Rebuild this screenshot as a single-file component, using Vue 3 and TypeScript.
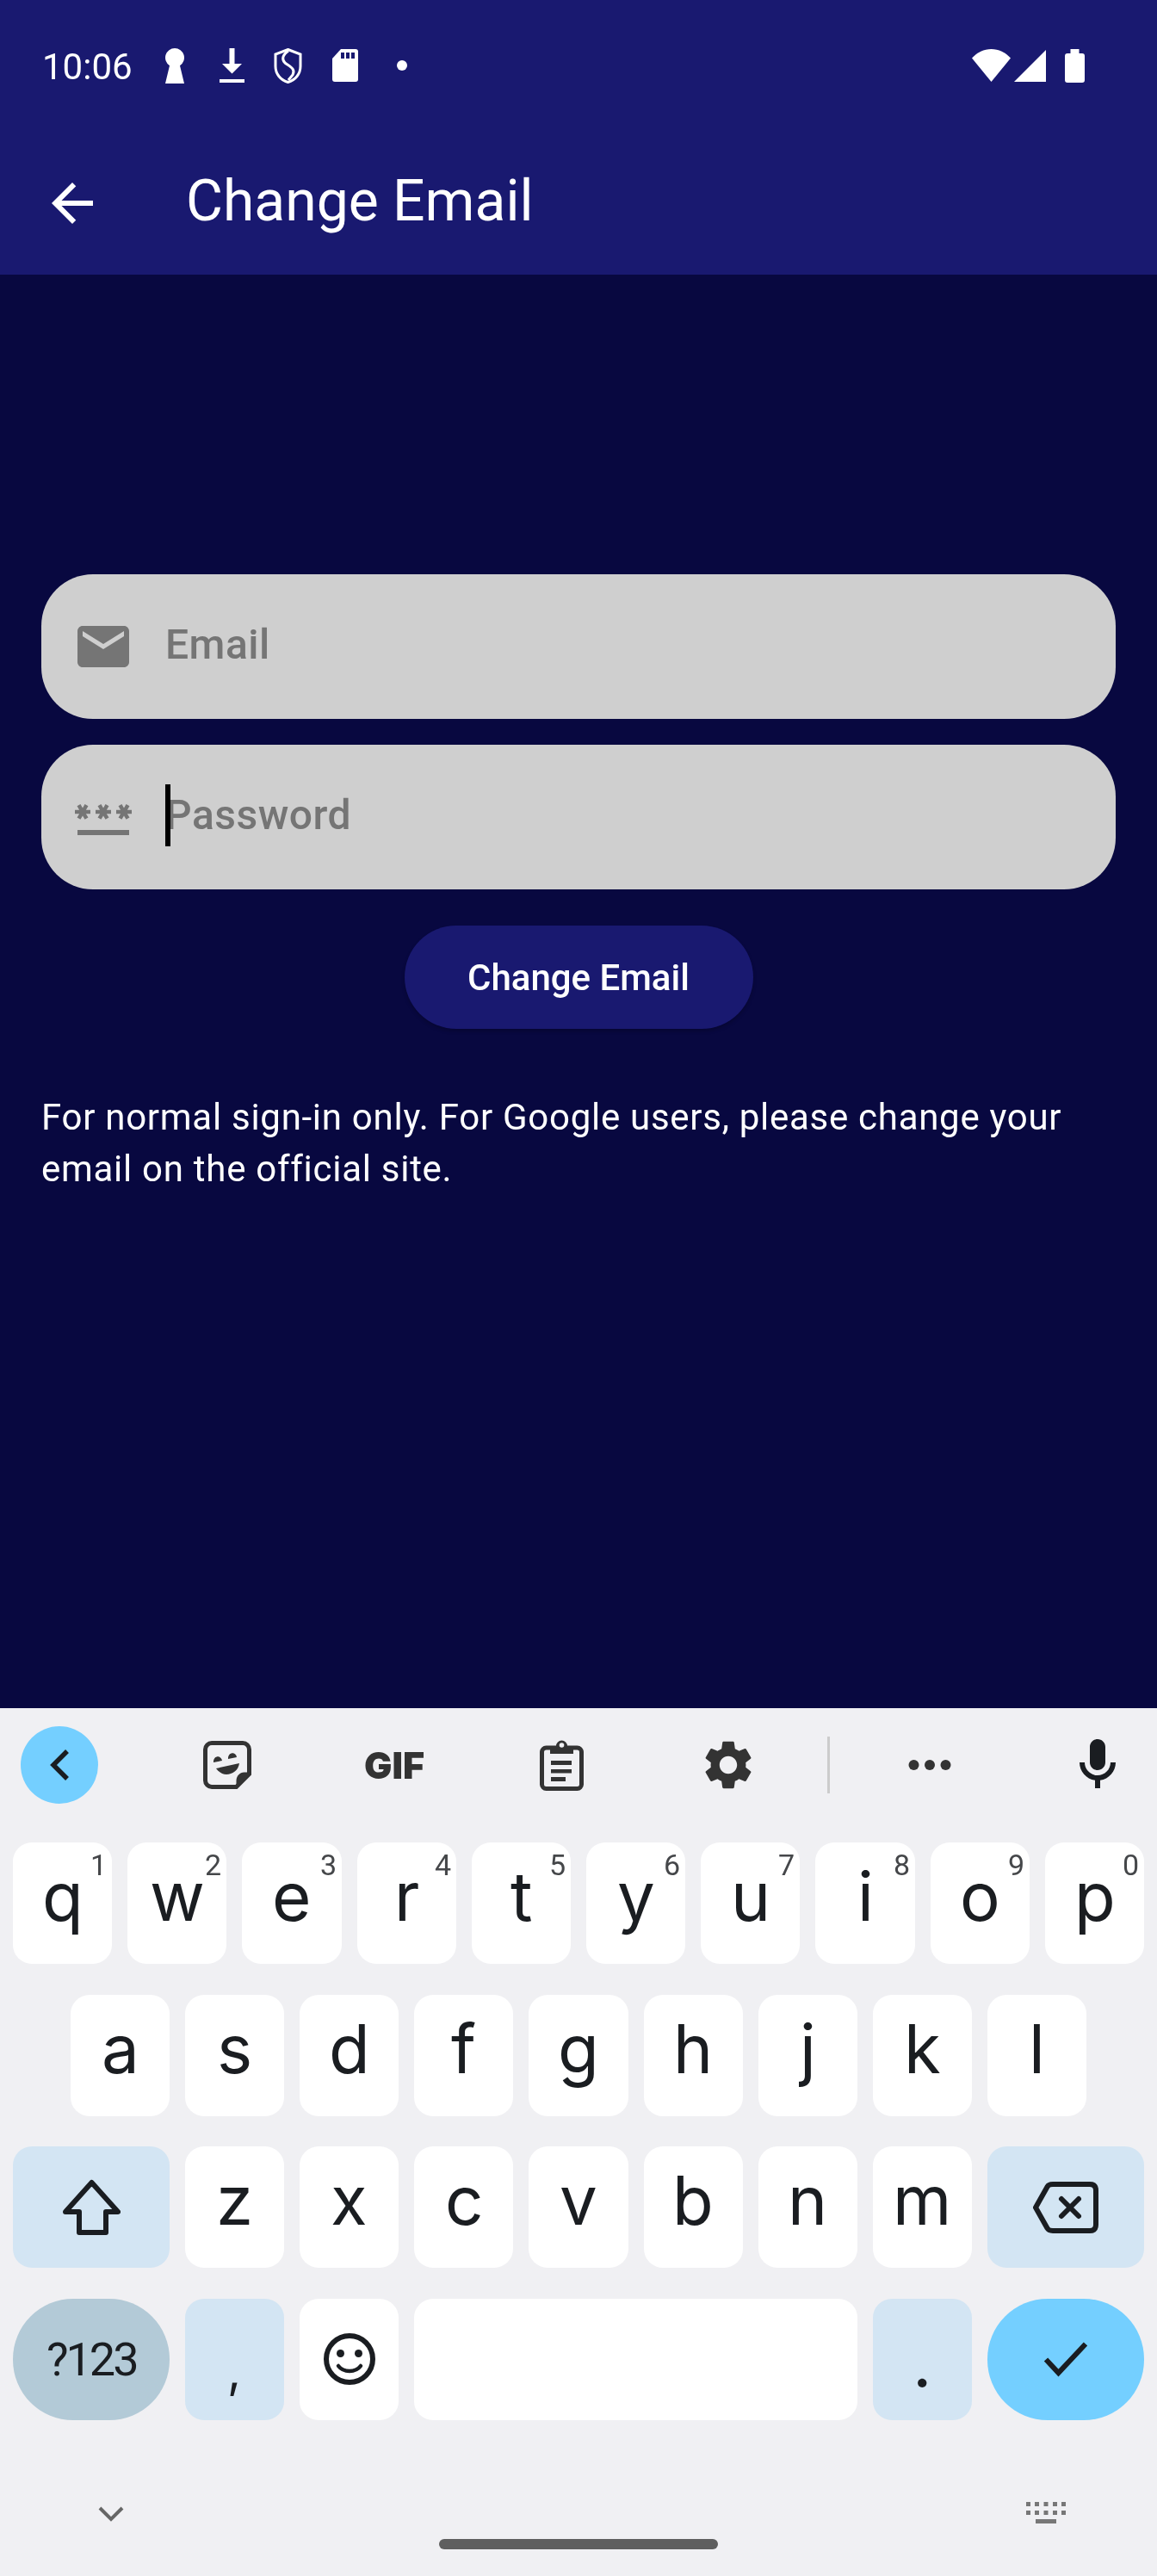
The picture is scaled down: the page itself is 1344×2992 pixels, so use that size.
<template>
  <div class="screen">
    <header class="app-header">
      <div class="status-bar">
        <span class="clock txt">10:06</span>
        <svg class="st-keyhole" width="22" height="41" viewBox="0 0 22 41"><path d="M11 0a11 11 0 0 1 6 20.2L22 41H0L5 20.2A11 11 0 0 1 11 0z" fill="#fff" /></svg>
        <svg class="st-download" width="29" height="40" viewBox="0 0 29 40"><path d="M11.5 0h6v18H26L14.5 29.5 3 18h8.500zM0 36h29v4H0z" fill="#fff" /></svg>
        <svg class="st-shield" width="33" height="41" viewBox="0 0 33 41">
          <path d="M16.500 1.500L31 7v14c0 9-6 16-14.500 18.500C8 37 2 30 2 21V7z" fill="none" stroke="#fff" stroke-width="3" />
          <path d="M17 3C10 8 9 13 13 17c5 4 13 7 9 14l-5 6" fill="none" stroke="#fff" stroke-width="3" />
        </svg>
        <svg class="st-sd" width="30" height="38" viewBox="0 0 30 38">
          <path d="M10 0h17a3 3 0 0 1 3 3v32a3 3 0 0 1-3 3H3a3 3 0 0 1-3-3V11z" fill="#fff" />
          <path d="M10 4h4v7h-4zM16 4h4v7h-4zM22 4h4v7h-4z" fill="#191970" />
        </svg>
        <span class="st-dot"></span>
        <div class="status-right">
          <svg width="45" height="38" viewBox="0 0 45 38"><path d="M0 10.500C6 4 14 0 22.500 0S39 4 45 10.500L22.500 38z" fill="#fff" /></svg>
          <svg class="st-signal" width="37" height="37" viewBox="0 0 37 37"><path d="M37 0v37H0z" fill="#fff" /></svg>
          <svg class="st-battery" width="23" height="39" viewBox="0 0 23 39"><path d="M6.500 0h10v5H20a3 3 0 0 1 3 3v28a3 3 0 0 1-3 3H3a3 3 0 0 1-3-3V8a3 3 0 0 1 3-3h3.500z" fill="#fff" /></svg>
        </div>
      </div>
      <div class="title-row">
        <svg class="back-icon" width="72" height="72" viewBox="0 0 24 24"><path d="M20 11H7.830l5.590-5.590L12 4l-8 8 8 8 1.410-1.410L7.830 13H20v-2z" fill="#fff" /></svg>
        <h1 class="title txt">Change Email</h1>
      </div>
    </header>

    <main class="content">
      <div class="field">
        <svg width="72" height="72" viewBox="0 0 24 24"><path d="M20 4H4c-1.100 0-1.990.9-1.990 2L2 18c0 1.100.9 2 2 2h16c1.100 0 2-.9 2-2V6c0-1.100-.9-2-2-2zm0 4l-8 5-8-5V6l8 5 8-5v2z" fill="#757575" /></svg>
        <span class="placeholder txt">Email</span>
      </div>
      <div class="field second">
        <svg width="72" height="72" viewBox="0 0 24 24"><path d="M2 17h20v2H2v-2zm1.150-4.050L4 11.470l.85 1.480 1.300-.75-.85-1.480H7v-1.500H5.300l.85-1.470L4.850 7 4 8.470 3.150 7l-1.300.75.85 1.470H1v1.500h1.700l-.85 1.480 1.300.75zm6.700-.75l1.300.75.85-1.480.85 1.480 1.300-.75-.85-1.480H15v-1.500h-1.700l.85-1.470-1.300-.75L12 8.470 11.150 7l-1.300.75.85 1.470H9v1.500h1.700l-.85 1.480zM23 9.220h-1.700l.85-1.470-1.300-.75L20 8.470 19.150 7l-1.300.75.85 1.470H17v1.500h1.700l-.85 1.480 1.300.75.85-1.480.85 1.480 1.300-.75-.85-1.480H23v-1.500z" fill="#757575" /></svg>
        <span class="placeholder txt">Password<i class="caret"></i></span>
      </div>
      <button class="submit" type="button"><span class="txt">Change Email</span></button>
      <p class="note txt">For normal sign-in only. For Google users, please change your email on the official site.</p>
    </main>

    <section class="keyboard">
      <div class="kb-tools">
        <span class="tool-back">
          <svg width="23" height="36" viewBox="0 0 23 36"><path d="M20 2L4 18l16 16" fill="none" stroke="#1a1d21" stroke-width="5.500" /></svg>
        </span>
        <span class="tool first-tool">
          <svg width="56" height="56" viewBox="0 0 56 56">
            <path d="M10 2.500h36a7.500 7.500 0 0 1 7.500 7.500v28.500l-15 15H10A7.500 7.500 0 0 1 2.500 46V10A7.500 7.500 0 0 1 10 2.500z" fill="none" stroke="#333" stroke-width="5" />
            <path d="M55 38L38.500 55V46c0-5 4-9.500 9-9.500h7.500z" fill="#333" />
            <path d="M12 25c-.5-8 9-9 10-2zM29 21c-.5-8 9-9 10-2z" fill="#333" />
            <path d="M15 32l27-6c-1 8-8 13-15 13-5 0-9-3-12-7z" fill="#333" />
          </svg>
        </span>
        <span class="tool"><b class="gif txt">GIF</b></span>
        <span class="tool">
          <svg width="51" height="60" viewBox="0 0 51 60">
            <rect x="2.500" y="10" width="46" height="47.500" rx="5" fill="none" stroke="#333" stroke-width="5" />
            <path d="M12 8h7a6.500 6.500 0 0 1 13 0h7v9H12z" fill="#333" />
            <circle cx="25.500" cy="7" r="2.800" fill="#f0f0f3" />
            <path d="M13 25h24v5H13zM13 35h24v4.500H13zM13 44h17v5H13z" fill="#333" />
          </svg>
        </span>
        <span class="tool">
          <svg width="68" height="68" viewBox="0 0 24 24"><path d="M19.140 12.940c.04-.3.06-.61.06-.94 0-.32-.02-.64-.07-.94l2.030-1.580c.18-.14.23-.41.12-.61l-1.920-3.320c-.12-.22-.37-.29-.59-.22l-2.390.96c-.5-.38-1.030-.7-1.620-.94l-.36-2.540c-.04-.24-.24-.41-.48-.41h-3.840c-.24 0-.43.17-.47.41l-.36 2.540c-.59.24-1.130.57-1.620.94l-2.390-.96c-.22-.08-.47 0-.59.22L2.740 8.870c-.12.21-.08.47.12.61l2.030 1.580c-.05.3-.09.63-.09.94s.02.64.07.94l-2.030 1.580c-.18.14-.23.41-.12.61l1.920 3.320c.12.22.37.29.59.22l2.390-.96c.5.38 1.030.7 1.620.94l.36 2.540c.05.24.24.41.48.41h3.840c.24 0 .44-.17.47-.41l.36-2.540c.59-.24 1.130-.56 1.620-.94l2.390.96c.22.08.47 0 .59-.22l1.920-3.320c.12-.22.07-.47-.12-.61l-2.010-1.580zM12 15.600c-1.980 0-3.600-1.620-3.600-3.600s1.620-3.600 3.600-3.600 3.600 1.620 3.600 3.600-1.620 3.600-3.600 3.600z" fill="#333" /></svg>
        </span>
        <span class="tool-divider"></span>
        <span class="tool-dots">
          <svg width="50" height="14" viewBox="0 0 50 14"><circle cx="6.500" cy="7" r="6" fill="#333" /><circle cx="25" cy="7" r="6" fill="#333" /><circle cx="43.500" cy="7" r="6" fill="#333" /></svg>
        </span>
        <span class="tool-mic">
          <svg width="72" height="72" viewBox="0 0 24 24"><path d="M12 14c1.660 0 3-1.340 3-3V5c0-1.660-1.340-3-3-3S9 3.340 9 5v6c0 1.660 1.340 3 3 3zM17 11c0 2.760-2.240 5-5 5s-5-2.240-5-5H5c0 3.530 2.610 6.430 6 6.920V21h2v-3.080c3.390-.49 6-3.390 6-6.920h-2z" fill="#1a1d21" /></svg>
        </span>
      </div>

      <div class="kb-rows">
        <div class="kb-row row-top">
          <div v-for="(k, i) in topRow" :key="k" class="key">
            <span class="letter txt">{{ k }}</span>
            <span class="hint txt">{{ (i + 1) % 10 }}</span>
          </div>
        </div>
        <div class="kb-row row-home">
          <div v-for="k in homeRow" :key="k" class="key"><span class="letter txt">{{ k }}</span></div>
        </div>
        <div class="kb-row">
          <div class="key wide fn">
            <svg width="67" height="65" viewBox="0 0 67 65"><path d="M33.500 4L64 38H50v24H19V38H3z" fill="none" stroke="#1a1d21" stroke-width="6" stroke-linejoin="round" /></svg>
          </div>
          <div v-for="k in bottomRow" :key="k" class="key"><span class="letter txt">{{ k }}</span></div>
          <div class="key wide fn">
            <svg width="76" height="60" viewBox="0 0 76 60">
              <path d="M3 30L16.500 6Q18 3 23 3h43q7 0 7 7v40q0 7-7 7H23q-5 0-6.500-3z" fill="none" stroke="#1a1d21" stroke-width="6" stroke-linejoin="round" />
              <path d="M33 20l20 20M53 20L33 40" fill="none" stroke="#1a1d21" stroke-width="6" stroke-linecap="round" />
            </svg>
          </div>
        </div>
        <div class="kb-row">
          <div class="key wide round alt"><span class="sym txt">?123</span></div>
          <div class="key fn"><span class="letter comma txt">,</span></div>
          <div class="key">
            <svg width="60" height="60" viewBox="0 0 60 60">
              <circle cx="30" cy="30" r="27" fill="none" stroke="#1a1d21" stroke-width="6" />
              <circle cx="19.500" cy="23.500" r="4.500" fill="#1a1d21" />
              <circle cx="40.500" cy="23.500" r="4.500" fill="#1a1d21" />
              <path d="M17 38c3 4 7.500 6 13 6s10-2 13-6" fill="none" stroke="#1a1d21" stroke-width="4.500" stroke-linecap="round" />
            </svg>
          </div>
          <div class="key space"></div>
          <div class="key fn"><span class="letter low txt">.</span></div>
          <div class="key wide round enter">
            <svg width="52" height="41" viewBox="0 0 52 41"><path d="M3 20.500L17.500 36 49 2.500" fill="none" stroke="#1a1d21" stroke-width="6" /></svg>
          </div>
        </div>
      </div>

      <div class="kb-bottom">
        <svg class="hide-kb" width="30" height="18" viewBox="0 0 30 18"><path d="M2 2l13 13L28 2" fill="none" stroke="#666" stroke-width="4" /></svg>
        <span class="home-pill"></span>
        <svg class="switch-kb" width="46" height="26" viewBox="0 0 46 26">
          <path d="M0 0h5v5H0zM10 0h5v5h-5zM20.500 0h5v5h-5zM31 0h5v5h-5zM41 0h5v5h-5zM0 10h5v5H0zM10 10h5v5h-5zM20.500 10h5v5h-5zM31 10h5v5h-5zM41 10h5v5h-5zM11 20h24v5H11z" fill="#777" />
        </svg>
      </div>
    </section>
  </div>
</template>

<script setup lang="ts">
const topRow: string[] = ['q', 'w', 'e', 'r', 't', 'y', 'u', 'i', 'o', 'p']
const homeRow: string[] = ['a', 's', 'd', 'f', 'g', 'h', 'j', 'k', 'l']
const bottomRow: string[] = ['z', 'x', 'c', 'v', 'b', 'n', 'm']
</script>

<style>
html,
body {
  margin: 0;
  background: #080840;
}
</style>

<style scoped>
.screen {
  width: 1344px;
  height: 2992px;
  display: flex;
  flex-direction: column;
  background: #080840;
  font-family: Roboto, "Liberation Sans", sans-serif;
  overflow: hidden;
}

/* own layer, so text gets greyscale antialiasing like the phone */
.txt {
  will-change: transform;
}

.app-header {
  height: 319px;
  background: #191970;
  color: #fff;
}

.status-bar {
  height: 152px;
  display: flex;
  align-items: center;
  padding-left: 49px;
  box-sizing: border-box;
}

.clock {
  font-size: 42px;
  line-height: 42px;
  padding-top: 3px;
  width: 104px;
}

.st-keyhole { margin-left: 39px; }
.st-download { margin-left: 41px; }
.st-shield { margin-left: 34px; }
.st-sd { margin-left: 35px; }

.st-dot {
  width: 12px;
  height: 12px;
  margin-left: 45px;
  border-radius: 50%;
  background: #fff;
}

.status-right {
  margin-left: auto;
  margin-right: 84px;
  display: flex;
  align-items: center;
}

.st-signal { margin-left: 4px; }
.st-battery { margin-left: 22px; }

.title-row {
  height: 167px;
  display: flex;
  align-items: center;
  padding-left: 48px;
}

.title {
  margin: 0 0 0 96px;
  padding-bottom: 4px;
  font-size: 66px;
  line-height: 76px;
  font-weight: 400;
}

.content {
  flex: 1;
  padding: 348px 48px 0;
  display: flex;
  flex-direction: column;
}

.field {
  height: 168px;
  display: flex;
  align-items: center;
  padding-left: 36px;
  border-radius: 60px;
  background: #cfcfcf;
}

.field.second {
  margin-top: 30px;
}

.placeholder {
  position: relative;
  margin-left: 36px;
  padding-bottom: 4px;
  font-size: 48px;
  line-height: 56px;
  font-weight: 500;
  letter-spacing: 0.5px;
  color: #757575;
}

.caret {
  position: absolute;
  left: 0;
  top: -8px;
  width: 6px;
  height: 72px;
  background: #000;
}

.submit {
  align-self: center;
  width: 405px;
  height: 120px;
  margin-top: 42px;
  border: 0;
  border-radius: 60px;
  background: #191970;
  color: #fff;
  font-family: inherit;
  font-size: 42px;
  font-weight: 500;
  box-shadow: 0 3px 4px rgba(0, 0, 0, 0.2);
}

.submit .txt {
  display: inline-block;
}

.note {
  margin: 73px 0 0;
  font-size: 42px;
  line-height: 60px;
  letter-spacing: 0.72px;
  color: #fff;
}

.keyboard {
  height: 1008px;
  background: #f0f0f3;
  display: flex;
  flex-direction: column;
  color: #1a1d21;
}

.kb-tools {
  height: 156px;
  display: flex;
  align-items: center;
  padding: 0 0 24px 24px;
  box-sizing: border-box;
}

.tool-back {
  width: 90px;
  height: 90px;
  margin-right: 53px;
  border-radius: 50%;
  background: #74cfff;
  display: flex;
  align-items: center;
  justify-content: center;
}

.tool {
  width: 194px;
  display: flex;
  justify-content: center;
}

.gif {
  font-family: Inter, Roboto, sans-serif;
  font-size: 43px;
  line-height: 44px;
  font-weight: 900;
  color: #333;
}

.tool-divider {
  width: 3px;
  height: 66px;
  margin-left: 18px;
  background: #ccc;
}

.tool-dots {
  width: 120px;
  margin-left: 56px;
  display: flex;
  justify-content: center;
}

.tool-mic {
  margin-left: 99px;
  display: flex;
}

.kb-rows {
  display: flex;
  flex-direction: column;
  gap: 35.67px;
}

.kb-row {
  display: flex;
  gap: 18px;
  padding: 0 15px;
}

.row-home {
  padding: 0 82px;
}

.key {
  position: relative;
  flex: 1 1 0;
  height: 141px;
  display: flex;
  align-items: center;
  justify-content: center;
  border-radius: 22px;
  background: #fff;
}

.key.wide {
  flex: 0 0 182px;
}

.key.space {
  flex: 0 0 515px;
}

.key.fn {
  background: #d3e5f3;
}

.key.round {
  border-radius: 70px;
}

.key.alt {
  background: #b3cad7;
}

.key.enter {
  background: #74cfff;
}

.letter {
  font-family: Inter, Roboto, sans-serif;
  font-size: 78px;
  line-height: 78px;
  padding-bottom: 15px;
}

.letter.low {
  padding: 10px 0 0;
}

.letter.comma {
  font-size: 56px;
  line-height: 56px;
  padding: 26px 0 0;
}

.hint {
  position: absolute;
  top: 9px;
  right: 6px;
  font-size: 34px;
  line-height: 34px;
  color: #45474a;
}

.sym {
  font-size: 54px;
  letter-spacing: -3px;
}

.kb-bottom {
  flex: 1;
  position: relative;
}

.hide-kb {
  position: absolute;
  left: 114px;
  top: 100px;
}

.home-pill {
  position: absolute;
  left: 510px;
  top: 138px;
  width: 324px;
  height: 12px;
  border-radius: 6px;
  background: #5f5f5f;
}

.switch-kb {
  position: absolute;
  left: 1192px;
  top: 95px;
}
</style>
